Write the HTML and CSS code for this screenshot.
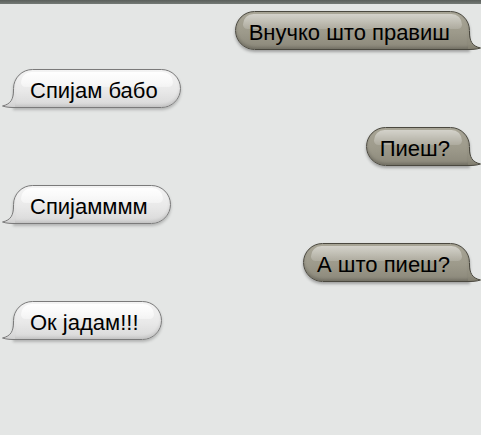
FILE: index.html
```html
<!DOCTYPE html>
<html>
<head>
<meta charset="utf-8">
<link rel="stylesheet" href="styles.css">
</head>
<body>
<svg class="defs" width="0" height="0" aria-hidden="true">
  <defs>
    <linearGradient id="gMe" x1="0" y1="0" x2="0" y2="1">
      <stop offset="0" stop-color="#9a9788"/>
      <stop offset="0.7" stop-color="#8e8b7c"/>
      <stop offset="1" stop-color="#7f7c6e"/>
    </linearGradient>
    <linearGradient id="gThem" x1="0" y1="0" x2="0" y2="1">
      <stop offset="0" stop-color="#e6e6e6"/>
      <stop offset="0.7" stop-color="#dadada"/>
      <stop offset="1" stop-color="#cfcfcf"/>
    </linearGradient>
  </defs>
</svg>
<div class="topbar"></div>
<div class="chat">
  <div class="bubble me">Внучко што правиш<svg class="tail" width="13" height="18" viewBox="0 0 13 18"><path class="fill" d="M0 0 L1.5 0 C1.5 9 4 14 12.5 16 C8 17.5 4 17.5 0 17.5 Z"/><path class="line" d="M1.5 0 C1.5 9 4 14 12.5 16 C8 17.5 4 17.5 0 17.5"/></svg></div>
  <div class="bubble them">Спијам бабо<svg class="tail" width="13" height="18" viewBox="0 0 13 18"><path class="fill" d="M13 0 L11.5 0 C11.5 9 9 14 0.5 16 C5 17.5 9 17.5 13 17.5 Z"/><path class="line" d="M11.5 0 C11.5 9 9 14 0.5 16 C5 17.5 9 17.5 13 17.5"/></svg></div>
  <div class="bubble me">Пиеш?<svg class="tail" width="13" height="18" viewBox="0 0 13 18"><path class="fill" d="M0 0 L1.5 0 C1.5 9 4 14 12.5 16 C8 17.5 4 17.5 0 17.5 Z"/><path class="line" d="M1.5 0 C1.5 9 4 14 12.5 16 C8 17.5 4 17.5 0 17.5"/></svg></div>
  <div class="bubble them">Спијамммм<svg class="tail" width="13" height="18" viewBox="0 0 13 18"><path class="fill" d="M13 0 L11.5 0 C11.5 9 9 14 0.5 16 C5 17.5 9 17.5 13 17.5 Z"/><path class="line" d="M11.5 0 C11.5 9 9 14 0.5 16 C5 17.5 9 17.5 13 17.5"/></svg></div>
  <div class="bubble me">А што пиеш?<svg class="tail" width="13" height="18" viewBox="0 0 13 18"><path class="fill" d="M0 0 L1.5 0 C1.5 9 4 14 12.5 16 C8 17.5 4 17.5 0 17.5 Z"/><path class="line" d="M1.5 0 C1.5 9 4 14 12.5 16 C8 17.5 4 17.5 0 17.5"/></svg></div>
  <div class="bubble them">Ок јадам!!!<svg class="tail" width="13" height="18" viewBox="0 0 13 18"><path class="fill" d="M13 0 L11.5 0 C11.5 9 9 14 0.5 16 C5 17.5 9 17.5 13 17.5 Z"/><path class="line" d="M11.5 0 C11.5 9 9 14 0.5 16 C5 17.5 9 17.5 13 17.5"/></svg></div>
</div>
</body>
</html>
```
FILE: styles.css
```css
html, body {
  margin: 0;
  padding: 0;
  background: #e4e6e5;
  height: 100%;
}
body {
  font-family: "Liberation Sans", Arial, sans-serif;
}
.defs {
  position: absolute;
  width: 0;
  height: 0;
}
.topbar {
  height: 4px;
  background: linear-gradient(#5a5f5b, #747a76);
}
.chat {
  display: flex;
  flex-direction: column;
  gap: 19px;
  padding: 7px 11px 0 13px;
}
.bubble {
  position: relative;
  z-index: 0;
  font-size: 22px;
  line-height: 23px;
  height: 23px;
  padding: 9px 19px 5px 13px;
  border-radius: 20px;
  color: #000;
  white-space: nowrap;
}
.bubble::before {
  content: "";
  position: absolute;
  z-index: -1;
  top: 2px;
  left: 7px;
  right: 7px;
  height: 15px;
  border-radius: 14px 14px 6px 6px;
  pointer-events: none;
}
.bubble.me {
  align-self: flex-end;
  border: 1px solid #4a483f;
  border-bottom-right-radius: 0;
  background: linear-gradient(to bottom, #a9a697 0%, #9d9a8b 55%, #8b887a 100%);
  box-shadow: 0 2px 3px rgba(0,0,0,0.3), inset 0 -2px 3px rgba(0,0,0,0.18);
}
.bubble.me::before {
  background: linear-gradient(to bottom, rgba(255,255,255,0.5), rgba(255,255,255,0.15));
}
.bubble.them {
  align-self: flex-start;
  padding: 9px 22px 5px 16px;
  border: 1px solid #7a7a7a;
  border-bottom-left-radius: 0;
  background: linear-gradient(to bottom, #f4f4f4 0%, #e9e9e9 55%, #d8d8d8 100%);
  box-shadow: 0 2px 3px rgba(0,0,0,0.22), inset 0 -2px 3px rgba(0,0,0,0.1);
}
.bubble.them::before {
  background: linear-gradient(to bottom, rgba(255,255,255,0.95), rgba(255,255,255,0.4));
}
.tail {
  position: absolute;
  bottom: -1px;
  overflow: visible;
}
.tail .line {
  fill: none;
  stroke-width: 1;
}
.me .tail {
  right: -12px;
}
.me .tail .fill {
  fill: url(#gMe);
}
.me .tail .line {
  stroke: #4a483f;
}
.them .tail {
  left: -12px;
}
.them .tail .fill {
  fill: url(#gThem);
}
.them .tail .line {
  stroke: #7a7a7a;
}
```
